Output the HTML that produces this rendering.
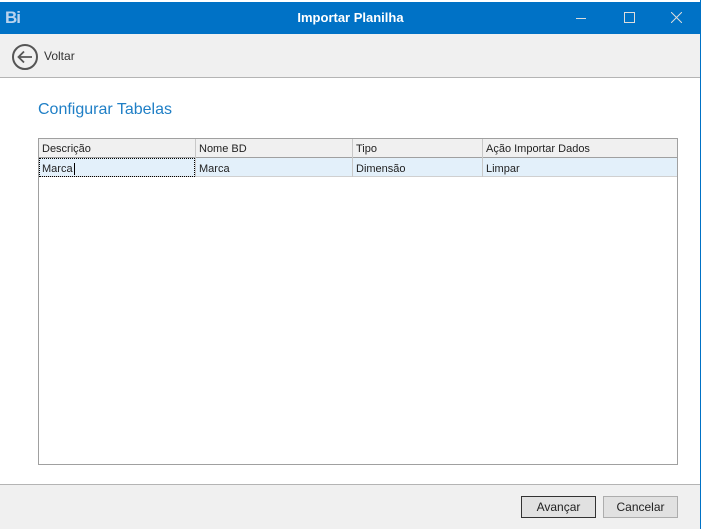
<!DOCTYPE html>
<html><head><style>
*{margin:0;padding:0;box-sizing:border-box}
body{width:702px;height:529px;background:#fff;position:relative;overflow:hidden;font-family:"Liberation Sans",sans-serif;font-size:11px;color:#222}
.a{position:absolute}
</style></head><body>
<div class="a" style="left:700px;top:0;width:1px;height:529px;background:#0072c6"></div>
<div class="a" style="left:0;top:2px;width:701px;height:32px;background:#0072c6"></div>
<div class="a" style="left:5px;top:8px;color:#b9d3ee;font-weight:bold;font-size:17px;letter-spacing:-1px">Bi</div>
<div class="a" style="left:0;top:10px;width:701px;text-align:center;color:#fff;font-weight:bold;font-size:13px">Importar Planilha</div>
<div class="a" style="left:576px;top:18px;width:10px;height:1px;background:#ddd"></div>
<div class="a" style="left:624px;top:12px;width:11px;height:11px;border:1px solid #ddd"></div>
<svg class="a" style="left:671px;top:12px" width="11" height="11"><path d="M0 0L11 11M11 0L0 11" stroke="#ddd" stroke-width="1"/></svg>
<div class="a" style="left:0;top:34px;width:700px;height:44px;background:#f0f0f0;border-bottom:1px solid #b4b4b4"></div>
<svg class="a" style="left:11px;top:43px" width="28" height="28"><circle cx="14" cy="14" r="12" fill="none" stroke="#555" stroke-width="2"/><path d="M21 14H8M13 8.5L7.5 14L13 19.5" fill="none" stroke="#555" stroke-width="1.8"/></svg>
<div class="a" style="left:44px;top:49px;font-size:12px;color:#333">Voltar</div>
<div class="a" style="left:38px;top:101px;font-size:16px;color:#1f7fc6">Configurar Tabelas</div>
<div class="a" style="left:38px;top:138px;width:640px;height:327px;border:1px solid #a0a0a0;background:#fff"></div>
<div class="a" style="left:39px;top:139px;width:638px;height:19px;background:#f0f0f0;border-bottom:1px solid #a0a0a0"></div>
<div class="a" style="left:39px;top:158px;width:638px;height:19px;background:#e3f0fa;border-bottom:1px solid #d0d0d0"></div>
<div class="a" style="left:195px;top:139px;width:1px;height:38px;background:#c8c8c8"></div>
<div class="a" style="left:352px;top:139px;width:1px;height:38px;background:#c8c8c8"></div>
<div class="a" style="left:482px;top:139px;width:1px;height:38px;background:#c8c8c8"></div>
<div class="a" style="left:39px;top:158px;width:156px;height:19px;border:1px dotted #000"></div>
<div class="a" style="left:42px;top:143px">Descrição</div>
<div class="a" style="left:199px;top:143px">Nome BD</div>
<div class="a" style="left:356px;top:143px">Tipo</div>
<div class="a" style="left:486px;top:143px">Ação Importar Dados</div>
<div class="a" style="left:42px;top:163px">Marca<span style="border-left:1px solid #000;margin-left:1px"></span></div>
<div class="a" style="left:199px;top:163px">Marca</div>
<div class="a" style="left:356px;top:163px">Dimensão</div>
<div class="a" style="left:486px;top:163px">Limpar</div>
<div class="a" style="left:0;top:484px;width:700px;height:45px;background:#f0f0f0;border-top:1px solid #b4b4b4"></div>
<div class="a" style="left:521px;top:496px;width:75px;height:22px;border:1px solid #333;background:#e1e1e1;text-align:center;line-height:20px;font-size:12px">Avançar</div>
<div class="a" style="left:603px;top:496px;width:75px;height:22px;border:1px solid #adadad;background:#e1e1e1;text-align:center;line-height:20px;font-size:12px">Cancelar</div>
</body></html>
